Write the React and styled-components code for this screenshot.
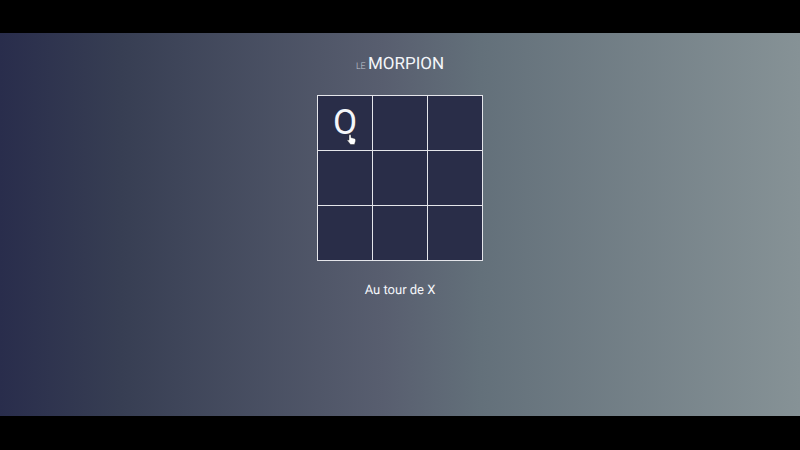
import React, { useState } from "react";
import styled, { createGlobalStyle } from "styled-components";

const GlobalStyle = createGlobalStyle`
  * { box-sizing: border-box; }
  body {
    margin: 0;
    background: #000;
    color: #f4f6fa;
    font-family: Roboto, "Liberation Sans", sans-serif;
    text-rendering: geometricPrecision;
  }
`;

const Screen = styled.div`
  display: flex;
  flex-direction: column;
  min-height: 100vh;
  padding: 33px 0 34px;
`;

const Game = styled.main`
  flex: 1;
  display: flex;
  flex-direction: column;
  align-items: center;
  padding-top: 20px;
  background: linear-gradient(90deg, #292d4c 0%, #373e53 15%, #585e6f 48%, #63707a 60%, #869296 100%);
`;

const Title = styled.h1`
  margin: 0 0 20px;
  font-size: 17px;
  line-height: 22px;
  font-weight: 400;
`;

const Article = styled.span`
  color: #c3c7d1;
  font-size: 9px;
  font-weight: 300;
`;

const Board = styled.div`
  position: relative;
  display: grid;
  grid-template-columns: repeat(3, 54px);
  grid-auto-rows: 54px;
  gap: 1px;
  padding: 1px;
  background: #e4e5ea;
`;

const Cell = styled.button`
  border: 0;
  padding: 0;
  background: #292d48;
  color: #f4f6fa;
  font: 400 35px/54px Roboto, "Liberation Sans", sans-serif;
  cursor: pointer;
`;

const Pointer = styled.svg`
  position: absolute;
  left: 30px;
  top: 39px;
  width: 9px;
  height: 11px;
  pointer-events: none;
`;

const Status = styled.p`
  margin: 20px 0 0;
  font-size: 13px;
  line-height: 20px;
`;

const Header = styled.header`
  display: flex;
  justify-content: center;
  height: 42px;
`;

export default function App() {
  const [cells, setCells] = useState(["O", "", "", "", "", "", "", "", ""]);
  const [turn, setTurn] = useState("X");
  const play = (index) => {
    if (cells[index]) return;
    setCells(cells.map((c, i) => (i === index ? turn : c)));
    setTurn(turn === "X" ? "O" : "X");
  };
  return (
    <>
      <GlobalStyle />
      <Screen>
        <Game>
          <Header><Title><Article>LE </Article>MORPION</Title></Header>
          <Board>
            {cells.map((c, i) => (
              <Cell key={i} type="button" aria-label={`Case ${i + 1}`} onClick={() => play(i)}>{c}</Cell>
            ))}
            <Pointer viewBox="0 0 9 11" aria-hidden="true">
              <path d="M2 1Q3 0 4 1V3.6L7.5 4.5Q9 5 8.6 7L7.5 10.5H3.5L.3 6.5Q.5 5.2 2 6.2Z" fill="#fff" stroke="#222" strokeWidth=".4" />
            </Pointer>
          </Board>
          <Status>Au tour de {turn}</Status>
        </Game>
      </Screen>
    </>
  );
}
